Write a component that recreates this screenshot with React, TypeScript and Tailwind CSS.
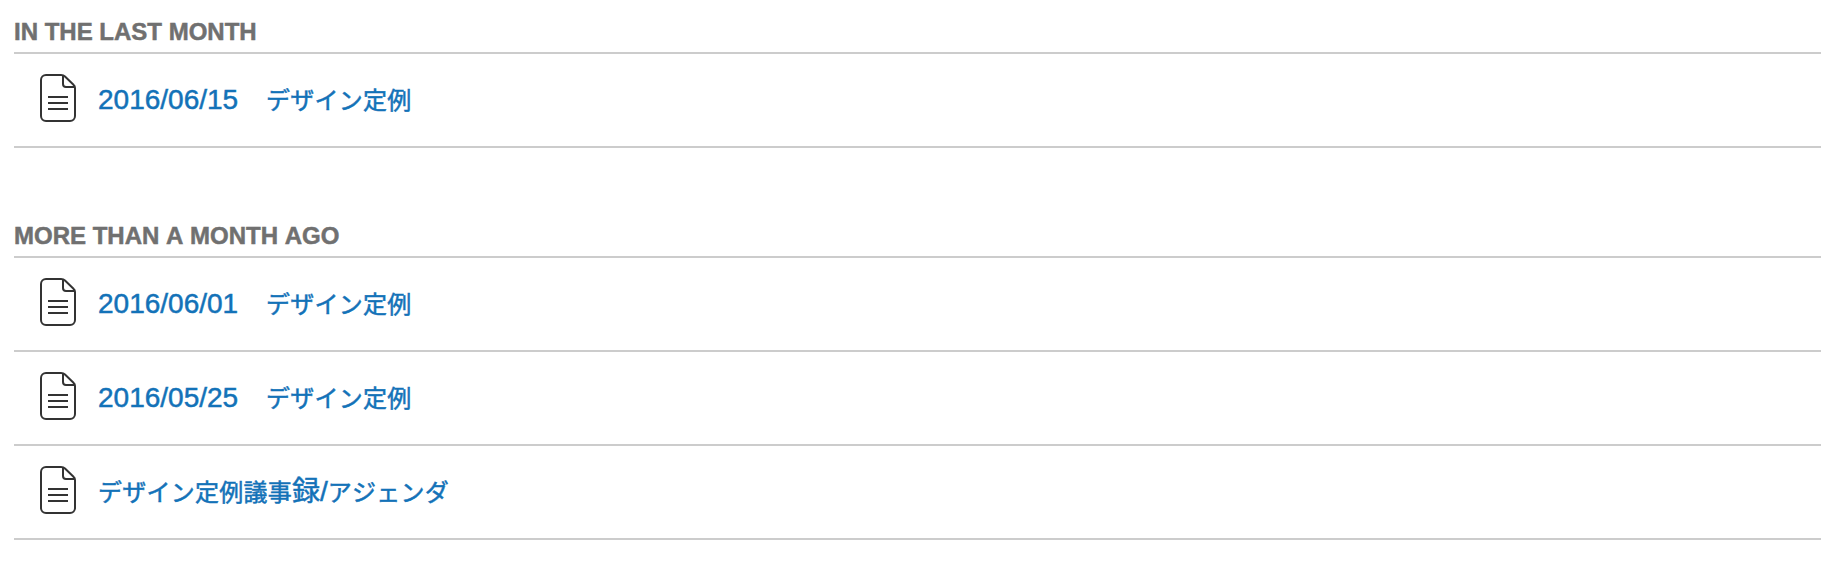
type Item = { date?: string; name: string; wide?: string; tail?: string };

const groups: { title: string; items: Item[] }[] = [
  { title: "IN THE LAST MONTH", items: [{ date: "2016/06/15", name: "デザイン定例" }] },
  {
    title: "MORE THAN A MONTH AGO",
    items: [
      { date: "2016/06/01", name: "デザイン定例" },
      { date: "2016/05/25", name: "デザイン定例" },
      { name: "デザイン定例議事", wide: "録/", tail: "アジェンダ" },
    ],
  },
];

function PageIcon() {
  return (
    <svg width="36" height="48" viewBox="0 0 36 48" fill="none" stroke="#333" strokeWidth="2" className="block shrink-0">
      <path d="M21 1H6a5 5 0 0 0-5 5v36a5 5 0 0 0 5 5h24a5 5 0 0 0 5-5V14q0-1.800-1.500-3.200L25 2.500Q23.500 1 21 1" />
      <path d="M23 1.500V10a3 3 0 0 0 3 3h9M8 23h20M8 29h20M8 35h20" />
    </svg>
  );
}

export default function App() {
  return (
    <main className="h-[568px] overflow-hidden bg-white pl-3.5 pt-[13px] font-['Liberation_Sans','Noto_Sans_CJK_JP',sans-serif] [font-kerning:none]">
      {groups.map((group) => (
        <section key={group.title} className="mb-[69px]">
          <h2 className="h-[41px] border-b-2 border-[#ccc] pt-px text-[24px] leading-[36px] font-bold text-[#707070] [-webkit-text-stroke:0.5px_#707070]">
            {group.title}
          </h2>
          <ul>
            {group.items.map((item) => (
              <li key={item.date ?? item.name} className="flex h-[94px] items-center gap-[22px] border-b-2 border-[#ccc] pl-[26px]">
                <div className="pb-1">
                  <PageIcon />
                </div>
                <a className="flex items-baseline text-[28px] leading-[40px] text-[#1372b8] [-webkit-text-stroke:0.5px_#1372b8]">
                  {item.date && <span className="w-[168px]">{item.date}</span>}
                  <span className="text-[24px] tracking-[0.25px]">{item.name}</span>
                  {item.wide && <span>{item.wide}</span>}
                  {item.tail && <span className="text-[24px] tracking-[0.25px]">{item.tail}</span>}
                </a>
              </li>
            ))}
          </ul>
        </section>
      ))}
    </main>
  );
}
